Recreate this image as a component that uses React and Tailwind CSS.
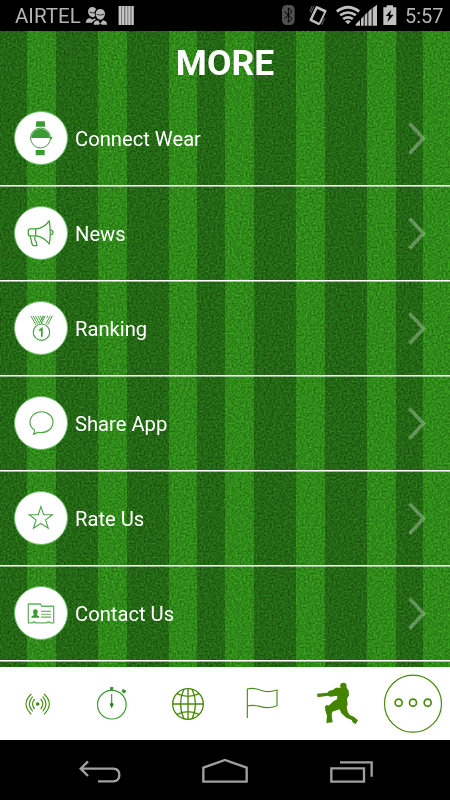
import React from 'react';

const stripes = [
    [27, 29],
    [98, 29],
    [169, 28],
    [225, 29],
    [296, 29],
    [367, 29],
    [423, 27],
];

const Turf = () => (
    <svg className="absolute inset-0 h-full w-full" viewBox="0 0 450 636" preserveAspectRatio="none">
        <filter id="grass" x="0" y="0" width="100%" height="100%" colorInterpolationFilters="sRGB">
            <feTurbulence type="fractalNoise" baseFrequency="0.5" numOctaves="3" seed="4" />
            <feColorMatrix values="1 0 0 0 0  1 0 0 0 0  1 0 0 0 0  0 0 0 0 1" />
        </filter>
        <rect width="450" height="636" fill="#236714" />
        {stripes.map(([x, width]) => (
            <rect key={x} x={x} width={width} height="636" fill="#2f8a19" />
        ))}
        <rect width="450" height="636" filter="url(#grass)" className="opacity-50 mix-blend-overlay" />
    </svg>
);

const WatchIcon = () => (
    <svg className="h-full w-full" viewBox="40.5 48 162 162" fill="#3c9a35">
        <path d="M107 77h26l2 17h-30zM105 166h28v17h-28z" />
        <circle cx="120" cy="129" r="31" fill="#fff" stroke="#3c9a35" strokeWidth="3" />
        <path d="M91 129a29 29 0 0 1 58 0z" />
        <rect x="151" y="125" width="5" height="8" rx="2" />
    </svg>
);

const NewsIcon = () => (
    <svg className="h-full w-full" viewBox="40.5 33 162 162" fill="none" stroke="#43a23c" strokeWidth="4" strokeLinejoin="round">
        <path d="M88 101h17c18-2 32-10 42-25 3 18 5 50 0 72-10-13-24-23-42-25H88q-6 0-6-6v-10q0-6 6-6z" />
        <path d="M105 101v22M88 124l6 26q1 3 4 3h11l-3-13-3-4-1-12M151 104q8 2 8 8t-8 8" />
    </svg>
);

const RankingIcon = () => (
    <svg className="h-full w-full" viewBox="40.5 318 162 162" fill="none" stroke="#43a23c" strokeWidth="3.5">
        <circle cx="123" cy="412" r="25.5" />
        <path d="M90 361l15 28M97 361l14 26M104 361l13 24M112 361l13 24M119 361l8 15M127 361l3 6M135 361l-13 25M129 361l-12 22M143 361l-3 6M150 361l-13 25M157 361l-15 28" strokeWidth="3" />
        <path d="M116 407l8-6v25" stroke="#3c9a35" strokeWidth="5.5" />
    </svg>
);

const ShareIcon = () => (
    <svg className="h-full w-full" viewBox="40.5 33 162 162" fill="none" stroke="#4ba644" strokeWidth="3.5" strokeLinejoin="round">
        <path d="M101 136c-9-6-14-14-14-24 0-18 16-33 36-33s36 14 36 32-16 33-36 33c-4 0-8 0-11-1-4 3-9 6-15 6 4-4 5-8 4-13z" />
    </svg>
);

const RateIcon = () => (
    <svg className="h-full w-full" viewBox="40.5 318 162 162" fill="none" stroke="#4ba644" strokeWidth="3.5">
        <path d="M121 364l9 25h27l-21 16 8 26-23-15-23 15 8-26-21-16h28z" />
    </svg>
);

const ContactIcon = () => (
    <svg className="h-full w-full" viewBox="40.5 78 162 162" fill="none" stroke="#66b35f" strokeWidth="4">
        <path d="M82 131h38l4 7h37v52h-10q-6-6-12 0h-33q-6-6-12 0H82z" />
        <path d="M122 154h31M122 163h31M122 172h31" strokeWidth="3.5" />
        <path d="M92 174v-5l8-4-3-6v-8q6-7 14 0v8l-3 6 8 4v5z" fill="#3c9a35" stroke="none" />
    </svg>
);

const items = [
    { label: 'Connect Wear', Icon: WatchIcon },
    { label: 'News', Icon: NewsIcon },
    { label: 'Ranking', Icon: RankingIcon },
    { label: 'Share App', Icon: ShareIcon },
    { label: 'Rate Us', Icon: RateIcon },
    { label: 'Contact Us', Icon: ContactIcon },
];

const StatusBar = () => (
    <div className="flex h-[31px] items-center bg-black text-xl leading-none text-[#b5b5b5]">
        <span className="ml-[15px] w-[70px] pt-px text-[20.5px]">AIRTEL</span>
        <svg className="h-[31px] w-[55px]" viewBox="255 0 165 93" fill="#b8b8b8">
            <path d="M264 36c0-10 6-15 13-15 6 0 10 3 12 7-6 4-7 12-3 20-3 3-7 4-11 3-6-2-10-8-11-15zM257 68c1-9 6-13 13-14l7 5 7-4 4 4c-6 2-10 5-12 9z" />
            <path d="M287 40q2-13 14-13t14 13c0 11-6 19-14 19s-14-8-14-19zM281 74q0-12 13-13l7 11 7-11q13 1 13 13h-16l-4-6-4 6z" />
            <path d="M290 43q11 5 22 0M268 36q9 4 17 2" stroke="#111" strokeWidth="2.5" fill="none" />
            <path d="M355 18h46v57h-46z" fill="#777" />
            <path d="M357 18h6v57h-6zM366 18h6v57h-6zM376 18h6v57h-6zM385 18h6v57h-6zM395 18h6v57h-6z" fill="#c4c4c4" />
        </svg>
        <svg className="ml-auto h-[31px] w-[125px]" viewBox="165 0 375 93" fill="#c0c0c0">
            <rect x="171" y="15" width="38" height="60" rx="14" fill="#505050" />
            <path d="M178 34l23 22-11 11V24l11 11-23 21" fill="none" stroke="#000" strokeWidth="3" />
            <path d="M276 18l27 12q3 2 1 5l-19 38q-2 3-5 2l-25-12q-3-2-1-5l18-38q2-3 4-2zm1 9l-15 31 20 10 15-31z" fillRule="evenodd" />
            <path d="M267 19l-10 20M262 18l-8 16M299 55l-9 20M295 53l-9 19" stroke="#999" strokeWidth="2" />
            <path d="M333 31q36-27 72 0l-5 7q-31-23-62 0zM343 43q26-19 52 0l-5 6q-21-15-42 0zM352 54q17-12 34 0l-5 6q-12-8-24 0zM360 64q9-6 18 0l-9 9z" />
            <path d="M392 77v-4l13-13v17zM408 57l8-9v29h-8zM419 46l8-9v40h-8zM430 35l10-10v52h-10zM443 24l13-10v63h-13z" />
            <path d="M475 22h10v-6h19v6h10v53h-39zM499 29l-17 19h10l-5 19 19-23h-11z" fillRule="evenodd" />
        </svg>
        <span className="mr-2 w-[37px] pt-px text-[20px]">5:57</span>
    </div>
);

const TabBar = () => (
    <div className="grid h-[73px] grid-cols-6 bg-white">
        <svg className="h-full w-full" viewBox="0 6 225 219" fill="none" stroke="#4b8f1b" strokeWidth="3.5">
            <circle cx="113" cy="117" r="5.5" fill="#3f860b" stroke="none" />
            <path d="M104 102q-13 15 0 30M122 102q13 15 0 30M98 95q-20 22 0 44M128 95q20 22 0 44M94 87q-32 30 0 61M132 87q32 30 0 61" />
        </svg>
        <svg className="h-full w-full" viewBox="225 6 225 219" fill="none" stroke="#3d9834" strokeWidth="3.5">
            <circle cx="335.5" cy="119" r="43" />
            <path d="M335 87v42" />
            <circle cx="335" cy="119" r="5.5" fill="#28891f" stroke="none" />
            <path d="M332 68h6v8h-6zM369 74l8 4-4 5-6-3z" fill="#28891f" />
        </svg>
        <svg className="h-full w-full" viewBox="450 6 225 219" fill="none" stroke="#478a0b" strokeWidth="4">
            <circle cx="564" cy="117" r="46" />
            <path d="M518 117h92M564 71v92M552 72q-21 45 0 90M576 72q21 45 0 90M531 86q33 16 66 0M531 148q33-16 66 0" />
        </svg>
        <svg className="h-full w-full" viewBox="0 6 225 219" fill="none" stroke="#4b8f1b" strokeWidth="3.5">
            <path d="M67 159V72c30-8 38 8 60 8 12 0 20-2 29-5v47c-10 4-18 6-29 6-22 0-35-12-60-5" />
        </svg>
        <svg className="h-full w-full" viewBox="225 6 225 219" fill="#438500">
            <path d="M347 68L345 60L350 54L358 53L364 57L365 68L371 77L372 91L366 101L368 118L365 126L368 140L374 150L386 155L399 166L392 177L384 173L380 165L364 158L349 145L344 133L322 140L320 150L323 172L304 174L306 152L301 137L300 124L306 120L311 122L325 109L336 103L337 92L316 95L309 92L278 97L276 86L308 83L311 78L325 74L332 68Z" />
        </svg>
        <svg className="h-full w-full" viewBox="450 6 225 219" fill="none" stroke="#478a0b">
            <circle cx="564" cy="116" r="85.5" strokeWidth="3.5" />
            <g strokeWidth="5">
                <circle cx="521" cy="113" r="10.5" />
                <circle cx="564" cy="113" r="10.5" />
                <circle cx="608" cy="113" r="10.5" />
            </g>
        </svg>
    </div>
);

const NavBar = () => (
    <div className="flex h-[60px] justify-center bg-black">
        <svg className="h-full w-[110px]" viewBox="0 0 330 180" fill="none" stroke="#a0a0a0" strokeWidth="7">
            <path d="M84 64L62 86l22 22M62 86h98q18 1 18 19t-18 19h-46" />
        </svg>
        <svg className="h-full w-[110px]" viewBox="330 0 330 180" fill="none" stroke="#a0a0a0" strokeWidth="7">
            <path d="M430 125V83l65-23 65 23v42z" />
        </svg>
        <svg className="h-full w-[110px]" viewBox="660 0 330 180" fill="none" stroke="#a0a0a0" strokeWidth="7">
            <path d="M814 85h98v40h-98zM840 67h95v43" />
        </svg>
    </div>
);

const App = () => {
    return (
        <div className="flex h-[800px] w-[450px] flex-col overflow-hidden bg-black font-['Roboto',sans-serif]">
            <StatusBar />
            <div className="relative h-[636px] overflow-hidden">
                <Turf />
                <div className="relative">
                    <h1 className="flex h-[60px] items-center justify-center pt-[6px] text-[35.5px] font-bold leading-none text-white">
                        MORE
                    </h1>
                    {items.map(({ label, Icon }) => (
                        <div
                            key={label}
                            className="flex h-[95px] items-center border-b border-white pl-[13.5px] pr-6 shadow-[0_1px_0_rgba(255,255,255,0.55)]"
                        >
                            <div className="h-[54px] w-[54px] rounded-full border border-[#6fc06b] bg-white">
                                <Icon />
                            </div>
                            <span className="ml-[7.5px] pt-[2px] text-[20.2px] leading-none text-white">{label}</span>
                            <svg className="ml-auto h-[34px] w-[18px]" viewBox="0 0 18 34" fill="none" stroke="#fff" strokeOpacity="0.3" strokeWidth="3.5">
                                <path d="M1.5 2.5l14 15-14 15" />
                            </svg>
                        </div>
                    ))}
                </div>
            </div>
            <TabBar />
            <NavBar />
        </div>
    );
};

export default App;
